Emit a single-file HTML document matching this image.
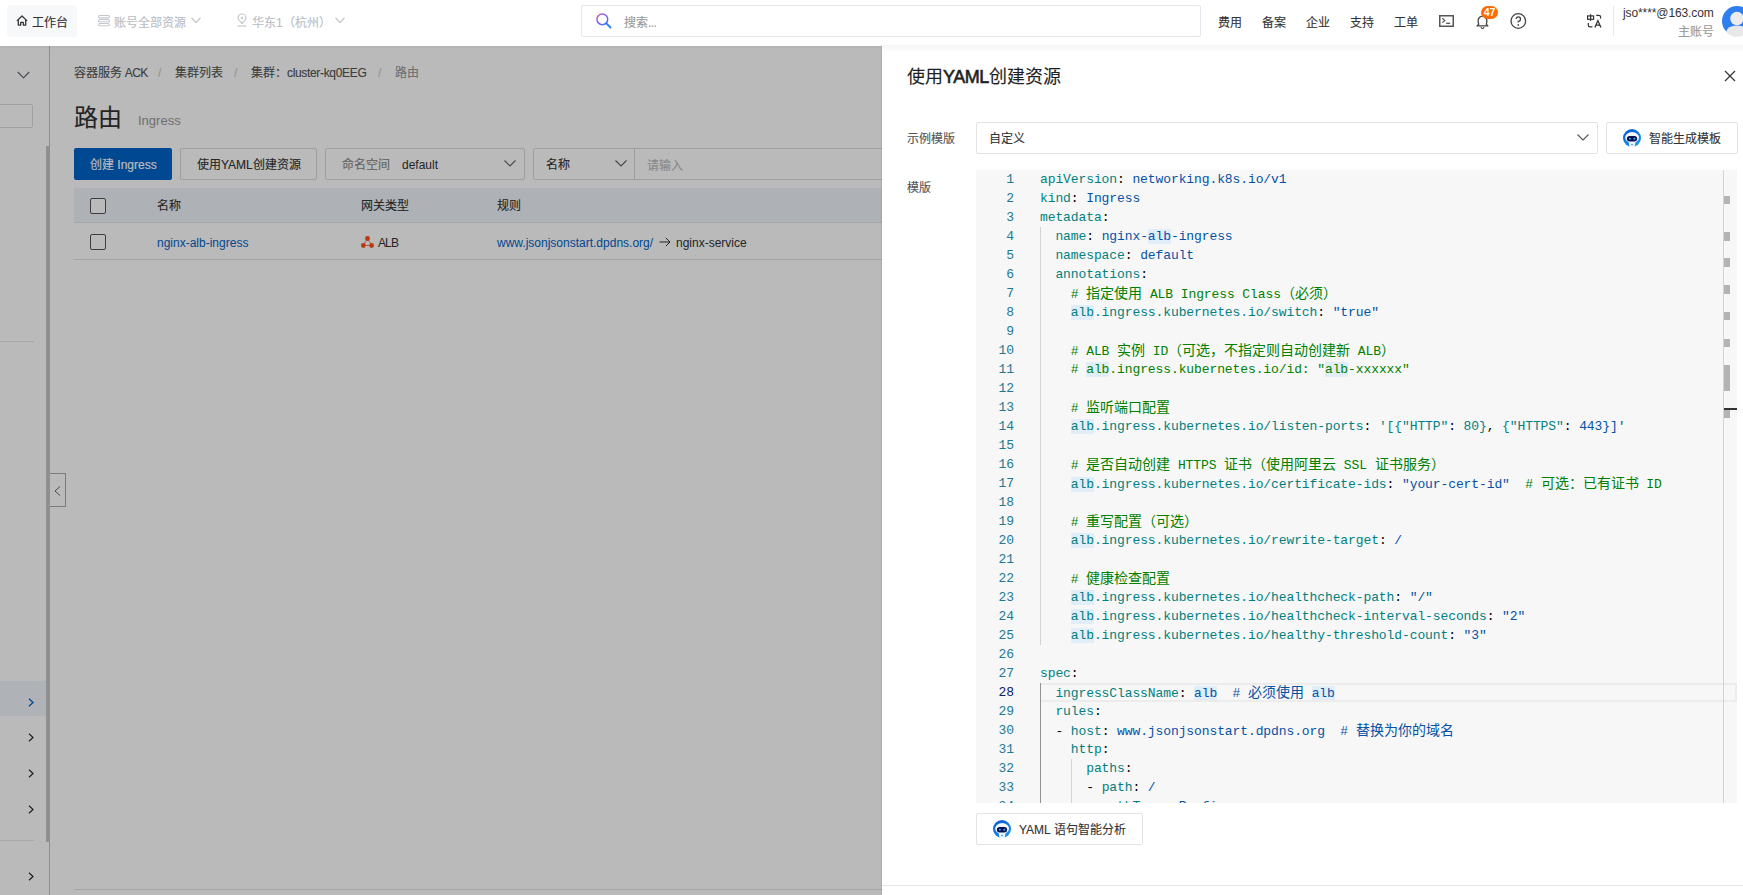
<!DOCTYPE html>
<html lang="zh-CN"><head><meta charset="utf-8">
<style>
*{box-sizing:border-box;margin:0;padding:0}
html,body{width:1743px;height:895px;overflow:hidden;background:#fff;font-family:"Liberation Sans",sans-serif;color:#333;font-size:12px}
.t{position:absolute;white-space:nowrap;line-height:19px;-webkit-text-stroke:0.12px currentColor}
svg{position:absolute;overflow:visible}
#hdr{position:absolute;left:0;top:0;width:1743px;height:46px;background:#fff;z-index:5;box-shadow:0 1px 3px rgba(0,0,0,.06)}
#page{position:absolute;left:0;top:0;width:1743px;height:895px;background:#fff}
#mask{position:absolute;left:0;top:46px;width:882px;height:849px;background:rgba(0,0,0,.27);z-index:8}
#drawer{position:absolute;left:882px;top:45px;width:861px;height:850px;background:#fff;z-index:9;box-shadow:-1px 0 1px rgba(0,0,0,.06)}
.box{position:absolute;border:1px solid #d8d8d8;border-radius:2px;background:#fff}
/* editor */
#ed{position:absolute;left:976px;top:170px;width:761px;height:633px;background:#f7f7f7;overflow:hidden}
.ln{position:absolute;left:0;width:38px;height:19px;text-align:right;color:#237893;font-family:"Liberation Mono",monospace;font-size:13px;line-height:19px;letter-spacing:-0.1px}
.ln.cur{color:#0b216f}
.cl{position:absolute;left:64px;height:19px;white-space:pre;font-family:"Liberation Mono",monospace;font-size:13px;line-height:19px;letter-spacing:-0.1px;color:#000}
.cl b{font-weight:normal}
.cl .k{color:#008080}
.cl .s{color:#0451a5}
.cl .g{color:#008000}
.cl .h{background:#e1edf9}
.cl .c{font-family:"Liberation Sans",sans-serif;font-size:14px;letter-spacing:0}
.guide{position:absolute;width:1px;background:#d3d3d3}
</style></head><body>
<div id="page">
  <!-- sidebar -->
  <div style="position:absolute;left:49px;top:45px;width:1px;height:850px;background:#c4c4c4"></div>
  <svg style="left:17px;top:71px" width="13" height="8" viewBox="0 0 13 8"><path d="M0.8 1 L6.5 6.8 L12.2 1" fill="none" stroke="#5a6070" stroke-width="1.1"/></svg>
  <div style="position:absolute;left:-4px;top:104px;width:37px;height:24px;border:1px solid #dcdcdc;border-radius:2px"></div>
  <div style="position:absolute;left:0;top:341px;width:34px;height:1px;background:#e5e5e5"></div>
  <div style="position:absolute;left:46px;top:146px;width:3px;height:696px;background:#c6c6c6"></div>
  <div style="position:absolute;left:0;top:681px;width:46px;height:35px;background:#f0f4fa"></div>
  <svg style="left:28px;top:698px" width="6" height="9" viewBox="0 0 6 9"><path d="M1 0.8 L5 4.5 L1 8.2" fill="none" stroke="#0064c8" stroke-width="1.3"/></svg>
  <svg style="left:28px;top:733px" width="6" height="9" viewBox="0 0 6 9"><path d="M1 0.8 L5 4.5 L1 8.2" fill="none" stroke="#333" stroke-width="1.3"/></svg>
  <svg style="left:28px;top:769px" width="6" height="9" viewBox="0 0 6 9"><path d="M1 0.8 L5 4.5 L1 8.2" fill="none" stroke="#333" stroke-width="1.3"/></svg>
  <svg style="left:28px;top:805px" width="6" height="9" viewBox="0 0 6 9"><path d="M1 0.8 L5 4.5 L1 8.2" fill="none" stroke="#333" stroke-width="1.3"/></svg>
  <div style="position:absolute;left:0;top:840px;width:34px;height:1px;background:#e5e5e5"></div>
  <svg style="left:28px;top:872px" width="6" height="9" viewBox="0 0 6 9"><path d="M1 0.8 L5 4.5 L1 8.2" fill="none" stroke="#333" stroke-width="1.3"/></svg>
  <div style="position:absolute;left:50px;top:473px;width:16px;height:34px;border:1px solid #aaa;border-left:none;background:#fff"></div>
  <svg style="left:54px;top:486px" width="7" height="10" viewBox="0 0 7 10"><path d="M6 0.5 L1 5 L6 9.5" fill="none" stroke="#666" stroke-width="1"/></svg>

  <!-- content -->
  <div class="t" style="left:74px;top:64px;color:#555">容器服务<span style="letter-spacing:-0.6px"> ACK</span></div>
  <div class="t" style="left:158px;top:64px;color:#ccc">/</div>
  <div class="t" style="left:175px;top:64px;color:#555">集群列表</div>
  <div class="t" style="left:234px;top:64px;color:#ccc">/</div>
  <div class="t" style="left:251px;top:64px;color:#555">集群：<span style="letter-spacing:-0.33px">cluster-kq0EEG</span></div>
  <div class="t" style="left:378px;top:64px;color:#ccc">/</div>
  <div class="t" style="left:395px;top:64px;color:#999">路由</div>

  <div class="t" style="left:74px;top:102px;font-size:24px;line-height:32px;color:#333">路由</div>
  <div class="t" style="left:138px;top:112px;font-size:13px;line-height:18px;color:#999;-webkit-text-stroke:0">Ingress</div>

  <div style="position:absolute;left:74px;top:148px;width:98px;height:32px;background:#0064c8;border-radius:2px"></div>
  <div class="t" style="left:90px;top:156px;color:#fff">创建 Ingress</div>
  <div class="box" style="left:180px;top:148px;width:137px;height:32px;border-color:#d9d9d9"></div>
  <div class="t" style="left:197px;top:156px;color:#333">使用YAML创建资源</div>
  <div class="box" style="left:325px;top:148px;width:200px;height:32px;border-color:#d9d9d9"></div>
  <div class="t" style="left:342px;top:156px;color:#888">命名空间</div>
  <div class="t" style="left:402px;top:156px;color:#333;-webkit-text-stroke:0">default</div>
  <svg style="left:504px;top:160px" width="12" height="7" viewBox="0 0 12 7"><path d="M0.5 0.5 L6 6 L11.5 0.5" fill="none" stroke="#666" stroke-width="1.2"/></svg>
  <div class="box" style="left:533px;top:148px;width:360px;height:32px;border-color:#d9d9d9"></div>
  <div style="position:absolute;left:634px;top:149px;width:1px;height:30px;background:#d9d9d9"></div>
  <div class="t" style="left:546px;top:156px;color:#333">名称</div>
  <svg style="left:615px;top:160px" width="12" height="7" viewBox="0 0 12 7"><path d="M0.5 0.5 L6 6 L11.5 0.5" fill="none" stroke="#666" stroke-width="1.2"/></svg>
  <div class="t" style="left:647px;top:157px;color:#bbb">请输入</div>

  <div style="position:absolute;left:74px;top:188px;width:820px;height:35px;background:#eff3f8;border-bottom:1px solid #e3e3e3"></div>
  <div style="position:absolute;left:90px;top:198px;width:16px;height:16px;border:1px solid #555;border-radius:2px;background:#fff"></div>
  <div class="t" style="left:157px;top:197px;color:#333">名称</div>
  <div class="t" style="left:361px;top:197px;color:#333">网关类型</div>
  <div class="t" style="left:497px;top:197px;color:#333">规则</div>
  <div style="position:absolute;left:74px;top:223px;width:820px;height:37px;border-bottom:1px solid #e3e3e3"></div>
  <div style="position:absolute;left:90px;top:234px;width:16px;height:16px;border:1px solid #555;border-radius:2px;background:#fff"></div>
  <div class="t" style="left:157px;top:234px;color:#0064c8;-webkit-text-stroke:0">nginx-alb-ingress</div>
  <svg style="left:361px;top:236px" width="13" height="12" viewBox="0 0 13 12"><path d="M6.5 2.5 L2.2 9.5 L10.8 9.5 Z" fill="none" stroke="#ff4d1a" stroke-width="0.7"/><circle cx="6.5" cy="2.5" r="2.4" fill="#ff4d1a"/><circle cx="2.4" cy="9.5" r="2.4" fill="#ff4d1a"/><circle cx="10.6" cy="9.5" r="2.4" fill="#ff4d1a"/></svg>
  <div class="t" style="left:378px;top:234px;color:#333;letter-spacing:-0.9px;-webkit-text-stroke:0">ALB</div>
  <div class="t" style="left:497px;top:234px;color:#0064c8;-webkit-text-stroke:0">www.jsonjsonstart.dpdns.org/</div>
  <svg style="left:659px;top:237px" width="12" height="10" viewBox="0 0 12 10"><path d="M0.5 5 H11 M6.8 0.8 L11 5 L6.8 9.2" fill="none" stroke="#333" stroke-width="1"/></svg>
  <div class="t" style="left:676px;top:234px;color:#333;-webkit-text-stroke:0">nginx-service</div>

  <div style="position:absolute;left:74px;top:889px;width:820px;height:1px;background:#e3e3e3"></div>
</div>

<div id="hdr">
  <div style="position:absolute;left:7px;top:5px;width:70px;height:32px;background:#f7f8fa;border-radius:3px"></div>
  <svg style="left:16px;top:15px" width="12" height="11" viewBox="0 0 12 11"><path d="M0.9 5.9 L6 1 L11.1 5.9 M2.3 4.6 V10.1 H4.7 V7.4 H7.3 V10.1 H9.7 V4.6" fill="none" stroke="#333" stroke-width="1.3" stroke-linejoin="round"/></svg>
  <div class="t" style="left:32px;top:14px;color:#333">工作台</div>
  <svg style="left:98px;top:15px" width="12" height="11" viewBox="0 0 12 11"><rect x="0.55" y="0.55" width="10.9" height="2.3" rx="1.15" fill="none" stroke="#c3c7cd" stroke-width="1.1"/><rect x="0.55" y="4.5" width="10.9" height="2.3" rx="1.15" fill="none" stroke="#c3c7cd" stroke-width="1.1"/><rect x="0.55" y="8.45" width="10.9" height="2.3" rx="1.15" fill="none" stroke="#c3c7cd" stroke-width="1.1"/></svg>
  <div class="t" style="left:114px;top:14px;color:#b9bdc4">账号全部资源</div>
  <svg style="left:191px;top:17px" width="10" height="7" viewBox="0 0 10 7"><path d="M0.5 0.8 L5 5.5 L9.5 0.8" fill="none" stroke="#c5c8ce" stroke-width="1.3"/></svg>
  <svg style="left:237px;top:14px" width="10" height="13" viewBox="0 0 10 13"><path d="M5 9.5 C2 6.5 1 5 1 4 A4 4 0 0 1 9 4 C9 5 8 6.5 5 9.5 Z" fill="none" stroke="#c5c8ce" stroke-width="1.2"/><circle cx="5" cy="4" r="1.3" fill="#c5c8ce"/><path d="M0.5 12 H9.5" stroke="#c5c8ce" stroke-width="1.2"/></svg>
  <div class="t" style="left:252px;top:14px;color:#b9bdc4">华东1（杭州）</div>
  <svg style="left:335px;top:17px" width="10" height="7" viewBox="0 0 10 7"><path d="M0.5 0.8 L5 5.5 L9.5 0.8" fill="none" stroke="#c5c8ce" stroke-width="1.3"/></svg>

  <div style="position:absolute;left:581px;top:5px;width:620px;height:32px;border:1px solid #e4e7ed;border-radius:2px"></div>
  <svg style="left:596px;top:13px" width="16" height="16" viewBox="0 0 16 16"><defs><linearGradient id="sg" x1="0" y1="0" x2="1" y2="1"><stop offset="0" stop-color="#e05a9a"/><stop offset=".45" stop-color="#8a5cf0"/><stop offset="1" stop-color="#2a7cff"/></linearGradient></defs><circle cx="6.3" cy="6.3" r="5.4" fill="none" stroke="url(#sg)" stroke-width="1.5"/><path d="M10.3 10.3 L14.5 14.5" stroke="#2a7cff" stroke-width="1.8" stroke-linecap="round"/></svg>
  <div class="t" style="left:624px;top:14px;color:#999">搜索<span style="letter-spacing:-0.6px">...</span></div>

  <div class="t" style="left:1218px;top:14px;color:#333">费用</div>
  <div class="t" style="left:1262px;top:14px;color:#333">备案</div>
  <div class="t" style="left:1306px;top:14px;color:#333">企业</div>
  <div class="t" style="left:1350px;top:14px;color:#333">支持</div>
  <div class="t" style="left:1394px;top:14px;color:#333">工单</div>
  <svg style="left:1439px;top:15px" width="15" height="12" viewBox="0 0 15 12"><rect x="0.75" y="0.75" width="13.5" height="10.5" fill="none" stroke="#555" stroke-width="1.5"/><path d="M3.3 3.2 L5.8 5.4 L3.3 7.6" fill="none" stroke="#555" stroke-width="1.2"/><path d="M7.2 8.3 H11.2" stroke="#555" stroke-width="1.3"/></svg>
  <svg style="left:1476px;top:15px" width="13" height="14" viewBox="0 0 13 14"><path d="M1.1 10.9 L2.7 9.3 C2.7 8.5 2.1 7.8 2.1 6 C2.1 3.3 4.1 1.1 6.5 1.1 C8.9 1.1 10.9 3.3 10.9 6 C10.9 7.8 10.3 8.5 10.3 9.3 L11.9 10.9 Z" fill="none" stroke="#444" stroke-width="1.3" stroke-linejoin="round"/><path d="M5.1 12.1 A1.4 1.4 0 0 0 7.9 12.1" fill="none" stroke="#444" stroke-width="1.1"/></svg>
  <div style="position:absolute;left:1481px;top:5.5px;width:17px;height:13px;background:#ff6a00;border-radius:7px;color:#fff;font-size:10.5px;font-weight:bold;line-height:13px;text-align:center;letter-spacing:-0.2px">47</div>
  <svg style="left:1510px;top:13px" width="17" height="16" viewBox="0 0 17 16"><circle cx="8.3" cy="8" r="7.3" fill="none" stroke="#444" stroke-width="1.3"/><path d="M6.1 6.1 A2.2 2.2 0 1 1 8.3 8.3 V9.6" fill="none" stroke="#444" stroke-width="1.3"/><circle cx="8.3" cy="11.9" r="0.85" fill="#444"/></svg>
  
  <svg style="left:1586px;top:14px" width="16" height="14" viewBox="0 0 16 14"><rect x="1.6" y="1.9" width="6" height="3.4" fill="none" stroke="#333" stroke-width="1.2"/><path d="M4.6 0.3 V6.8" stroke="#333" stroke-width="1.3"/><path d="M10.2 1.3 H12.8 Q14.6 1.3 14.6 3.1 V4.4" fill="none" stroke="#333" stroke-width="1.2"/><path d="M2.3 9 V11.3 Q2.3 12.9 4 12.9 H6.4" fill="none" stroke="#333" stroke-width="1.2"/><path d="M8.9 13.6 L11.9 6.6 L14.9 13.6 M10 11.2 H13.8" fill="none" stroke="#333" stroke-width="1.3"/></svg>
  <div style="position:absolute;left:1613px;top:6px;width:1px;height:30px;background:#e5e7eb"></div>
  <div class="t" style="left:1623px;top:4px;color:#333;font-size:12px;letter-spacing:-0.1px;-webkit-text-stroke:0">jso****@163.com</div>
  <div class="t" style="left:1678px;top:23px;color:#999">主账号</div>
  <svg style="left:1722px;top:6px" width="30" height="30" viewBox="0 0 30 30"><circle cx="15" cy="15" r="15" fill="#2d7ff0"/><circle cx="15" cy="12.5" r="6.8" fill="#ececec"/><path d="M4 26 Q5.5 19.5 15 19.5 Q24.5 19.5 26 26 A15 15 0 0 1 4 26 Z" fill="#e8e8e8"/></svg>
</div>

<div id="mask"></div>

<div id="drawer">
  <div style="position:absolute;left:0;top:0;width:861px;height:8px;background:linear-gradient(rgba(0,0,0,.04),rgba(0,0,0,0))"></div>
</div>
<div style="position:absolute;left:0;top:0;z-index:10">
  <div class="t" style="left:907px;top:66px;font-size:18px;line-height:22px;color:#1f1f1f">使用<b style="font-weight:normal;letter-spacing:-0.5px;-webkit-text-stroke:0.6px #1f1f1f">YAML</b>创建资源</div>
  <svg style="left:1724px;top:70px" width="12" height="12" viewBox="0 0 12 12"><path d="M1 1 L11 11 M11 1 L1 11" stroke="#333" stroke-width="1.2"/></svg>
  <div class="t" style="left:907px;top:130px;color:#555">示例模版</div>
  <div class="box" style="left:976px;top:122px;width:622px;height:32px;border-color:#e3e3e3"></div>
  <div class="t" style="left:989px;top:130px;color:#333">自定义</div>
  <svg style="left:1577px;top:134px" width="12" height="7" viewBox="0 0 12 7"><path d="M0.5 0.5 L6 6 L11.5 0.5" fill="none" stroke="#555" stroke-width="1.1"/></svg>
  <div class="box" style="left:1606px;top:122px;width:132px;height:32px;border-color:#e3e3e3"></div>
  <svg style="left:1623px;top:129px" width="18" height="18" viewBox="0 0 18 18"><defs><linearGradient id="rg" x1="0.2" y1="0" x2="0.8" y2="1"><stop offset="0" stop-color="#0a5ad6"/><stop offset="1" stop-color="#1a9cf2"/></linearGradient></defs><circle cx="9" cy="9" r="9" fill="url(#rg)"/><ellipse cx="9.1" cy="8.5" rx="6.9" ry="5.4" fill="#f4fbff"/><path d="M5.6 13 H12.6 L11.6 18 H6.6 Z" fill="#eef6ff"/><circle cx="9" cy="15.6" r="0.8" fill="#2a7ee0"/><rect x="3.9" y="7" width="10.2" height="5.4" rx="2.7" fill="#0b0c52"/><circle cx="6.9" cy="9.7" r="1" fill="#25b8e8"/><circle cx="11.3" cy="9.7" r="1" fill="#25b8e8"/></svg>
  <div class="t" style="left:1649px;top:130px;color:#333">智能生成模板</div>
  <div class="t" style="left:907px;top:179px;color:#555">模版</div>

  <div id="ed">
    <div class="ln" style="top:0px">1</div><div class="ln" style="top:19px">2</div><div class="ln" style="top:38px">3</div><div class="ln" style="top:57px">4</div><div class="ln" style="top:76px">5</div><div class="ln" style="top:95px">6</div><div class="ln" style="top:114px">7</div><div class="ln" style="top:133px">8</div><div class="ln" style="top:152px">9</div><div class="ln" style="top:171px">10</div><div class="ln" style="top:190px">11</div><div class="ln" style="top:209px">12</div><div class="ln" style="top:228px">13</div><div class="ln" style="top:247px">14</div><div class="ln" style="top:266px">15</div><div class="ln" style="top:285px">16</div><div class="ln" style="top:304px">17</div><div class="ln" style="top:323px">18</div><div class="ln" style="top:342px">19</div><div class="ln" style="top:361px">20</div><div class="ln" style="top:380px">21</div><div class="ln" style="top:399px">22</div><div class="ln" style="top:418px">23</div><div class="ln" style="top:437px">24</div><div class="ln" style="top:456px">25</div><div class="ln" style="top:475px">26</div><div class="ln" style="top:494px">27</div><div class="ln cur" style="top:513px">28</div><div class="ln" style="top:532px">29</div><div class="ln" style="top:551px">30</div><div class="ln" style="top:570px">31</div><div class="ln" style="top:589px">32</div><div class="ln" style="top:608px">33</div><div class="ln" style="top:627px">34</div>
    <div class="guide" style="left:64px;top:57px;height:418px"></div>
    <div class="guide" style="left:64px;top:513px;height:120px;background:#939393"></div>
    <div class="guide" style="left:95px;top:589px;height:44px"></div>
    
    <div class="cl" style="top:0px"><b class="k">apiVersion</b>: <b class="s">networking.k8s.io/v1</b></div><div class="cl" style="top:19px"><b class="k">kind</b>: <b class="s">Ingress</b></div><div class="cl" style="top:38px"><b class="k">metadata</b>:</div><div class="cl" style="top:57px">  <b class="k">name</b>: <b class="s">nginx-</b><b class="s h">alb</b><b class="s">-ingress</b></div><div class="cl" style="top:76px">  <b class="k">namespace</b>: <b class="s">default</b></div><div class="cl" style="top:95px">  <b class="k">annotations</b>:</div><div class="cl" style="top:114px">    <b class="g"># <span class="c">指定使用</span> ALB Ingress Class<span class="c">（必须）</span></b></div><div class="cl" style="top:133px">    <b class="k h">alb</b><b class="k">.ingress.kubernetes.io/switch</b>: <b class="s">&quot;true&quot;</b></div><div class="cl" style="top:152px"></div><div class="cl" style="top:171px">    <b class="g"># ALB <span class="c">实例</span> ID<span class="c">（可选，不指定则自动创建新</span> ALB<span class="c">）</span></b></div><div class="cl" style="top:190px">    <b class="g"># </b><b class="g h">alb</b><b class="g">.ingress.kubernetes.io/id: &quot;</b><b class="g h">alb</b><b class="g">-xxxxxx&quot;</b></div><div class="cl" style="top:209px"></div><div class="cl" style="top:228px">    <b class="g"># <span class="c">监听端口配置</span></b></div><div class="cl" style="top:247px">    <b class="k h">alb</b><b class="k">.ingress.kubernetes.io/listen-ports</b>: <b class="k">&#x27;[{&quot;HTTP&quot;</b>: <b class="k">80}</b>, <b class="k">{&quot;HTTPS&quot;</b>: <b class="s">443}]&#x27;</b></div><div class="cl" style="top:266px"></div><div class="cl" style="top:285px">    <b class="g"># <span class="c">是否自动创建</span> HTTPS <span class="c">证书（使用阿里云</span> SSL <span class="c">证书服务）</span></b></div><div class="cl" style="top:304px">    <b class="k h">alb</b><b class="k">.ingress.kubernetes.io/certificate-ids</b>: <b class="s">&quot;your-cert-id&quot;</b><b class="g">  # <span class="c">可选：已有证书</span> ID</b></div><div class="cl" style="top:323px"></div><div class="cl" style="top:342px">    <b class="g"># <span class="c">重写配置（可选）</span></b></div><div class="cl" style="top:361px">    <b class="k h">alb</b><b class="k">.ingress.kubernetes.io/rewrite-target</b>: <b class="s">/</b></div><div class="cl" style="top:380px"></div><div class="cl" style="top:399px">    <b class="g"># <span class="c">健康检查配置</span></b></div><div class="cl" style="top:418px">    <b class="k h">alb</b><b class="k">.ingress.kubernetes.io/healthcheck-path</b>: <b class="s">&quot;/&quot;</b></div><div class="cl" style="top:437px">    <b class="k h">alb</b><b class="k">.ingress.kubernetes.io/healthcheck-interval-seconds</b>: <b class="s">&quot;2&quot;</b></div><div class="cl" style="top:456px">    <b class="k h">alb</b><b class="k">.ingress.kubernetes.io/healthy-threshold-count</b>: <b class="s">&quot;3&quot;</b></div><div class="cl" style="top:475px"></div><div class="cl" style="top:494px"><b class="k">spec</b>:</div><div class="cl" style="top:513px">  <b class="k">ingressClassName</b>: <b class="s h">alb</b><b class="s">  # <span class="c">必须使用</span> </b><b class="s h">alb</b></div><div class="cl" style="top:532px">  <b class="k">rules</b>:</div><div class="cl" style="top:551px">  - <b class="k">host</b>: <b class="s">www.jsonjsonstart.dpdns.org  # <span class="c">替换为你的域名</span></b></div><div class="cl" style="top:570px">    <b class="k">http</b>:</div><div class="cl" style="top:589px">      <b class="k">paths</b>:</div><div class="cl" style="top:608px">      - <b class="k">path</b>: <b class="s">/</b></div><div class="cl" style="top:627px">        <b class="k">pathType</b>: <b class="s">Prefix</b></div>
    <div style="position:absolute;left:65px;top:513px;width:696px;height:19px;border:2px solid #ececec;border-left:none"></div>
    <div style="position:absolute;left:747px;top:0;width:1px;height:633px;background:#d3d3d3"></div>
    <div style="position:absolute;left:748px;top:26px;width:6px;height:8px;background:#b4b4b4"></div>
    <div style="position:absolute;left:748px;top:62px;width:6px;height:9px;background:#b4b4b4"></div>
    <div style="position:absolute;left:748px;top:88px;width:6px;height:9px;background:#b4b4b4"></div>
    <div style="position:absolute;left:748px;top:115px;width:6px;height:9px;background:#b4b4b4"></div>
    <div style="position:absolute;left:748px;top:142px;width:6px;height:8px;background:#b4b4b4"></div>
    <div style="position:absolute;left:748px;top:169px;width:6px;height:8px;background:#b4b4b4"></div>
    <div style="position:absolute;left:748px;top:195px;width:6px;height:26px;background:#b4b4b4"></div>
    <div style="position:absolute;left:748px;top:238px;width:13px;height:2px;background:#333"></div>
    <div style="position:absolute;left:748px;top:240px;width:6px;height:8px;background:#b4b4b4"></div>
  </div>

  <div class="box" style="left:976px;top:813px;width:167px;height:32px;border-color:#e3e3e3"></div>
  <svg style="left:993px;top:820px" width="18" height="18" viewBox="0 0 18 18"><circle cx="9" cy="9" r="9" fill="url(#rg)"/><ellipse cx="9.1" cy="8.5" rx="6.9" ry="5.4" fill="#f4fbff"/><path d="M5.6 13 H12.6 L11.6 18 H6.6 Z" fill="#eef6ff"/><circle cx="9" cy="15.6" r="0.8" fill="#2a7ee0"/><rect x="3.9" y="7" width="10.2" height="5.4" rx="2.7" fill="#0b0c52"/><circle cx="6.9" cy="9.7" r="1" fill="#25b8e8"/><circle cx="11.3" cy="9.7" r="1" fill="#25b8e8"/></svg>
  <div class="t" style="left:1019px;top:821px;color:#333">YAML 语句智能分析</div>
  <div style="position:absolute;left:882px;top:885px;width:861px;height:1px;background:#e5e5e5"></div>
</div>
</body></html>
